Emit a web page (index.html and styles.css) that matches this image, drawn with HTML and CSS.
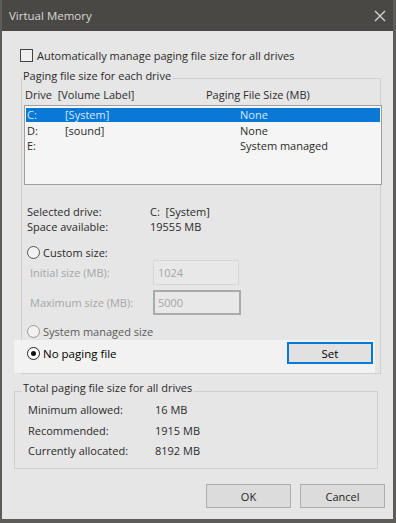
FILE: index.html
```html
<!DOCTYPE html>
<html>
<head>
    <meta charset="UTF-8">
    <title>Virtual Memory</title>
    <link rel="stylesheet" href="styles.css">
</head>
<body>
    <div class="window">
        <div class="titlebar">
            <span class="title">Virtual Memory</span>
            <svg class="close" width="12" height="12" viewBox="0 0 12 12">
                <path d="M1 1L11 11M11 1L1 11" stroke="#d4d4d4" stroke-width="1.4" fill="none"/>
            </svg>
        </div>

        <div class="content">
            <div class="check-row">
                <span class="checkbox"></span>
                <span>Automatically manage paging file size for all drives</span>
            </div>

            <fieldset class="group group-drives">
                <legend>Paging file size for each drive</legend>
                <div class="list-head">
                    <span>Drive&nbsp; [Volume Label]</span>
                    <span>Paging File Size (MB)</span>
                </div>
                <div class="drive-list">
                    <div class="drive selected"><span>C:</span><span>[System]</span><span>None</span></div>
                    <div class="drive"><span>D:</span><span>[sound]</span><span>None</span></div>
                    <div class="drive"><span>E:</span><span></span><span>System managed</span></div>
                </div>

                <div class="info">
                    <span>Selected drive:</span><span>C:&nbsp; [System]</span>
                    <span>Space available:</span><span>19555 MB</span>
                </div>

                <div class="radio-row custom">
                    <span class="radio"></span>
                    <span>Custom size:</span>
                </div>
                <div class="field-row">
                    <span class="field-label">Initial size (MB):</span>
                    <div class="field">1024</div>
                </div>
                <div class="field-row">
                    <span class="field-label">Maximum size (MB):</span>
                    <div class="field focused">5000</div>
                </div>
                <div class="radio-row system">
                    <span class="radio"></span>
                    <span>System managed size</span>
                </div>

                <div class="band">
                    <div class="radio-row nopaging">
                        <span class="radio checked"></span>
                        <span>No paging file</span>
                    </div>
                    <button class="btn btn-set">Set</button>
                </div>
            </fieldset>

            <fieldset class="group group-total">
                <legend>Total paging file size for all drives</legend>
                <div class="totals">
                    <span>Minimum allowed:</span><span>16 MB</span>
                    <span>Recommended:</span><span>1915 MB</span>
                    <span>Currently allocated:</span><span>8192 MB</span>
                </div>
            </fieldset>

            <div class="actions">
                <button class="btn">OK</button>
                <button class="btn">Cancel</button>
            </div>
        </div>
    </div>
</body>
</html>
```

FILE: styles.css
```css
body {
    margin: 0;
    font-family: "Open Sans", "Noto Sans", sans-serif;
    font-size: 11px;
    color: #2a2a2a;
    background: #e6e6e6;
}
.window {
    width: 396px;
    height: 523px;
    box-sizing: border-box;
    border: solid #5e5c59;
    border-width: 0 3px 4px 2px;
    background: #e6e6e6;
    overflow: hidden;
}
.titlebar {
    height: 31px;
    margin: 0 -3px 0 -2px;
    background: #4a4845;
    display: flex;
    align-items: center;
    justify-content: space-between;
    padding: 0 10px 0 9px;
}
.title {
    color: #d8d8d8;
    font-size: 11.5px;
}
.close {
    margin-top: 1px;
}
.content {
    display: flex;
    flex-direction: column;
}
.check-row {
    display: flex;
    align-items: center;
    height: 14px;
    margin: 17px 0 0 18px;
}
.checkbox {
    width: 11px;
    height: 11px;
    border: 1px solid #444;
    background: #f0f0f0;
    margin-right: 4px;
}
.group {
    margin: 7px 0 0 19px;
    padding: 0;
    border: 1px solid #cfcfcf;
    min-width: 0;
    width: 360px;
    box-sizing: border-box;
}
.group legend {
    padding: 0 2px 5px 1px;
    line-height: 14px;
}
.list-head {
    display: grid;
    grid-template-columns: 181px auto;
    padding-left: 3px;
    line-height: 14px;
}
.drive-list {
    margin: 3px -2px 0 2px;
    height: 80px;
    box-sizing: border-box;
    border: 1px solid #9e9e9e;
    background: #f5f5f5;
    padding: 2px 1px;
}
.drive {
    display: grid;
    grid-template-columns: 38px 175px auto;
    height: 15px;
    line-height: 15px;
    padding-left: 1px;
}
.drive.selected {
    background: #0a78d6;
    color: #d8e8f7;
    height: 14px;
    line-height: 14px;
    margin-bottom: 1px;
}
.info {
    display: grid;
    grid-template-columns: 123px auto;
    margin-top: 19px;
    padding-left: 5px;
    line-height: 15px;
}
.radio-row {
    display: flex;
    align-items: center;
    height: 15px;
    padding-left: 5px;
}
.custom {
    margin-top: 11px;
}
.radio {
    width: 11px;
    height: 11px;
    border: 1px solid #555;
    border-radius: 50%;
    background: #f2f2f2;
    margin-right: 3px;
    box-sizing: content-box;
    position: relative;
}
.radio.checked::after {
    content: "";
    position: absolute;
    left: 3px;
    top: 3px;
    width: 5px;
    height: 5px;
    border-radius: 50%;
    background: #111;
}
.system {
    margin-top: 9px;
    color: #5a5a5a;
}
.system .radio {
    border-color: #9a9a9a;
}
.field-row {
    display: flex;
    align-items: center;
    padding-left: 8px;
    color: #a5a5a5;
}
.field-row + .field-row {
    margin-top: 5px;
}
.field-label {
    width: 123px;
}
.field {
    width: 86px;
    height: 25px;
    box-sizing: border-box;
    border: 1px solid #d6d6d6;
    background: #e8e8e8;
    padding: 5px 0 0 4px;
    line-height: 14px;
}
.field.focused {
    width: 88px;
    border: 2px solid #aaaaaa;
    padding: 4px 0 0 3px;
}
.band {
    display: flex;
    align-items: center;
    justify-content: space-between;
    margin: 1px 5px 0 -8px;
    padding: 2px 2px 9px 0;
    background: #f2f2f2;
}
.nopaging {
    padding-left: 13px;
    font-size: 11.5px;
    color: #000;
}
.nopaging .radio {
    border-color: #222;
    background: #fff;
}
.btn {
    font: inherit;
    color: #222;
    background: #e1e1e1;
    border: 1px solid #adadad;
    width: 85px;
    height: 24px;
    padding: 0;
}
.btn-set {
    width: 86px;
    height: 22px;
    border: 2px solid #0a78d6;
    color: #000;
    font-size: 11.5px;
}
.group-total {
    margin: 7px 0 0 12px;
    width: 364px;
}
.group-total legend {
    margin-left: 7px;
    padding-bottom: 7px;
}
.totals {
    display: grid;
    grid-template-columns: 127px auto;
    row-gap: 5.5px;
    padding: 0 0 10px 13px;
    line-height: 15px;
}
.actions {
    display: flex;
    justify-content: flex-end;
    gap: 9px;
    margin: 15px 8px 0 0;
}
.actions .btn {
    background: #dcdcdc;
}
```
